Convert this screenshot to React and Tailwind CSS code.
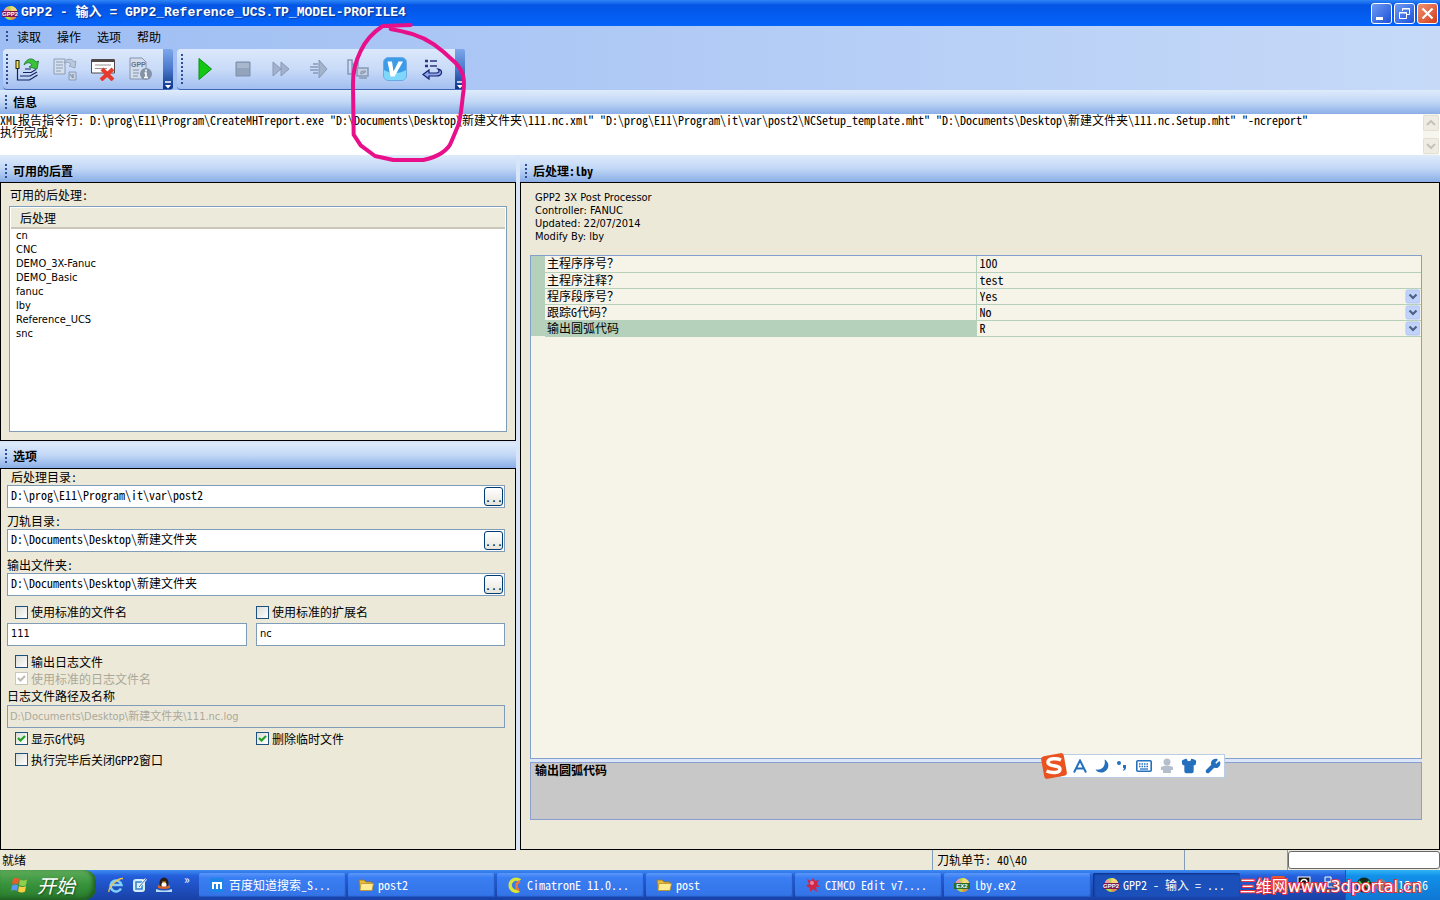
import { useState } from 'react';
import { Shirt, Wrench } from 'lucide-react';

const message = [
    'XML报告指令行: D:\\prog\\E11\\Program\\CreateMHTreport.exe "D:\\Documents\\Desktop\\新建文件夹\\111.nc.xml" "D:\\prog\\E11\\Program\\it\\var\\post2\\NCSetup_template.mht" "D:\\Documents\\Desktop\\新建文件夹\\111.nc.Setup.mht" "-ncreport"',
    '执行完成!',
].join('\n');

const posts = ['cn', 'CNC', 'DEMO_3X-Fanuc', 'DEMO_Basic', 'fanuc', 'lby', 'Reference_UCS', 'snc'];

const properties = [
    { id: 'prog-no', label: '主程序序号？', value: '100' },
    { id: 'prog-note', label: '主程序注释？', value: 'test' },
    { id: 'block-no', label: '程序段序号？', value: 'Yes', options: ['Yes', 'No'] },
    { id: 'trace', label: '跟踪G代码？', value: 'No', options: ['Yes', 'No'] },
    { id: 'arc', label: '输出圆弧代码', value: 'R', options: ['R', 'IJK'], selected: true },
];

const sans = 'font-["DejaVu_Sans_Condensed","Noto_Sans_CJK_SC",sans-serif] text-[11px]';

// Round badge with a dark name plate, shared by the title bar and the taskbar
const Badge = ({ text, plate, className }) => (
    <svg viewBox="0 0 16 16" className={className} aria-hidden="true">
        <circle cx="8.5" cy="8" r="7" fill="#b9dc3c" />
        <path d="M8.500 8 8.500 1A7 7 0 0 1 15.500 8Z" fill="#f6d77c" />
        <path d="M8.500 8 15.500 8A7 7 0 0 1 8.500 15Z" fill="#e58a54" />
        <path d="M1.500 8A7 7 0 0 1 5 2l3.500 6Z" fill="#ef9ab0" />
        <rect x="0" y="6" width="16" height="6" fill={plate} />
        <text x="8" y="11" fontSize="6" fontWeight="700" fill="#fff" textAnchor="middle" fontFamily="Liberation Sans, sans-serif">{text}</text>
    </svg>
);

const Folder = () => (
    <svg viewBox="0 0 16 16" className="size-4" aria-hidden="true">
        <path d="M1 3h5l2 2h6v8H2Z" fill="#e9b93b" stroke="#9c741a" strokeWidth=".8" />
        <path d="M3 6.500h12.500L14 13.500H2Z" fill="#ffeb94" stroke="#b8912b" strokeWidth=".8" />
    </svg>
);

const Grip = ({ className }) => (
    <span className={`w-[2px] shrink-0 bg-[repeating-linear-gradient(to_bottom,#2c4f95_0_2px,transparent_2px_4px)] ${className}`} />
);

const PanelHeader = ({ title, className }) => (
    <h2 className={`flex shrink-0 items-center bg-linear-to-b from-[#dfebfb] via-[#c1d7f6] to-[#8aaee6] pl-[5px] font-bold ${className}`}>
        <Grip className="mr-[6px] h-[14px]" />
        {title}
    </h2>
);

const ToolButton = ({ label, children }) => (
    <button type="button" aria-label={label} className="flex h-full w-[38px] items-center justify-center">
        <svg viewBox="0 0 24 24" className="size-6" fill="none">{children}</svg>
    </button>
);

const Overflow = () => (
    <button type="button" aria-label="更多" className="ml-[3px] flex w-[10px] items-end justify-center rounded-r-xs bg-linear-to-b from-[#7ea6ea] via-[#4a78cb] to-[#0d3388]">
        <svg viewBox="0 0 8 8" className="size-2" aria-hidden="true">
            <path d="M1 1h6" stroke="#fff" strokeWidth="1.500" />
            <path d="M1 4h6L4 7.500Z" fill="#fff" />
        </svg>
    </button>
);

const Check = ({ id, label, checked = false, disabled = false, className = '' }) => {
    const [on, setOn] = useState(checked);
    return (
        <label htmlFor={id} className={`flex items-center gap-[3px] ${disabled ? 'text-[#aca899]' : ''} ${className}`}>
            <span className="relative flex size-[13px]">
                <input
                    id={id}
                    type="checkbox"
                    checked={on}
                    disabled={disabled}
                    onChange={(e) => setOn(e.target.checked)}
                    className="size-[13px] appearance-none border border-[#1c5180] bg-linear-to-br from-[#dcdcd7] to-white disabled:border-[#cac8bb] disabled:from-white"
                />
                {on && (
                    <svg viewBox="0 0 13 13" className="pointer-events-none absolute inset-0" fill="none" aria-hidden="true">
                        <path d="M3 6l2.500 2.500L10 4" stroke={disabled ? '#bfbdb2' : '#21a121'} strokeWidth="2.200" />
                    </svg>
                )}
            </span>
            {label}
        </label>
    );
};

const PathField = ({ id, label, value, indent }) => (
    <div className="mb-[5px]">
        <label htmlFor={id} className={`block h-4 leading-4 ${indent ? 'pl-1' : ''}`}>{label}</label>
        <div className="flex h-[23px] items-center border border-[#7f9db9] bg-white pr-px">
            <input id={id} defaultValue={value} className="h-full min-w-0 flex-1 px-[3px] pb-1 outline-none" />
            <button type="button" aria-label="浏览" className="h-[19px] w-[19px] rounded-[3px] border border-[#003c74] bg-linear-to-b from-white to-[#e6e4da] text-center leading-4">...</button>
        </div>
    </div>
);

const textBox = 'h-[23px] w-full min-w-0 border border-[#7f9db9] bg-white px-[3px] pb-[3px] outline-none';

const MenuBar = () => (
    <nav className="flex h-[19px] items-center pl-[6px]">
        <Grip className="mr-[9px] h-[11px]" />
        <div className="flex gap-4">
            {['读取', '操作', '选项', '帮助'].map((item) => (
                <button key={item} type="button" className="leading-4">{item}</button>
            ))}
        </div>
    </nav>
);

const toolbar = 'flex rounded-sm border-b border-[#3d67b4] bg-linear-to-b from-[#dce8fb] via-[#c9dbf8] to-[#a3bff0]';

const Toolbars = () => (
    <div className="mt-[3px] flex h-[41px] gap-1 pl-[3px]">
        <div className={`${toolbar} pl-[3px]`}>
            <Grip className="my-[5px]" />
            <ToolButton label="读取刀轨">
                <path d="M2.500 3v9" stroke="#222" strokeWidth="4" />
                <path d="M2.500 4v7" stroke="#f4ea3a" strokeWidth="2" />
                <path d="M2.500 12v11h12l8-5M5 19h10l7-4M8 15.500h8l5-3M10 12h6" stroke="#13235f" strokeWidth="1.200" />
                <path d="M9 8C11 1 18 0 21 5l2.500-1-1.500 8-8-2 3-2C15 5 12 5 9 8Z" fill="#39c23a" stroke="#16771f" strokeWidth=".8" />
            </ToolButton>
            <ToolButton label="转换文件">
                <path d="M1 2h11v15H1Z" fill="#d6dfec" stroke="#8c9cb6" />
                <path d="M3 5h7M3 8h7M3 11h7M3 14h5" stroke="#8c9cb6" />
                <path d="M11 6c2-5 8-5 10-1l2-1-1 7-6-2 2-2c-2-2-5-2-7-1Z" fill="#bcc8d9" stroke="#8c9cb6" strokeWidth=".8" />
                <path d="M16 15h7v8h-7Z" fill="#c7d2e2" stroke="#8c9cb6" />
                <path d="M17 17l3 4v-4" stroke="#7384a1" />
            </ToolButton>
            <ToolButton label="清除信息">
                <path d="M.5 3h23v13H.5Z" fill="#fff" stroke="#524848" />
                <path d="M.5 3.500h23" stroke="#524848" strokeWidth="3" />
                <path d="M4 8h16M4 11.500h12" stroke="#9a8f8f" />
                <path d="M11 12l11 11M22 12 10 23" stroke="#e63b2c" strokeWidth="4" />
            </ToolButton>
            <ToolButton label="后处理信息">
                <path d="M1 1h12l4 4v17H1Z" fill="#d3ddeb" stroke="#8494ae" />
                <text x="2" y="10" fontSize="7" fontWeight="700" fill="#63738f" fontFamily="Liberation Sans, sans-serif">GPP</text>
                <path d="M4 13h6M4 16h6M4 19h5" stroke="#8494ae" />
                <circle cx="17" cy="17" r="6" fill="#8392a9" />
                <path d="M17 12.500v2M15.500 16H17v4.500M15 20.500h4" stroke="#fff" strokeWidth="1.600" />
            </ToolButton>
            <Overflow />
        </div>
        <div className={`${toolbar} pl-1`}>
            <Grip className="my-[5px] mr-[3px]" />
            <ToolButton label="运行">
                <path d="M6 1.500 18.500 12 6 22.500Z" fill="#12c813" stroke="#0b8f13" />
            </ToolButton>
            <ToolButton label="停止">
                <path d="M5 5h14v14H5Z" fill="#93a3be" stroke="#7c8dab" />
                <path d="M6 6h12v5H6Z" fill="#a9b7cd" />
            </ToolButton>
            <ToolButton label="快进">
                <path d="M4 5l8 7-8 7ZM12 5l8 7-8 7Z" fill="#a3b2cb" stroke="#8799b8" />
            </ToolButton>
            <ToolButton label="单步">
                <path d="M12 3l8 9-8 9Z" fill="#a3b2cb" stroke="#8799b8" />
                <path d="M6 7h5M3 10h8M3 13h8M6 16h5" stroke="#8799b8" strokeWidth="1.500" />
            </ToolButton>
            <ToolButton label="机床">
                <path d="M3 3h4v14H3ZM7 5l4 8M11 4h2v6" stroke="#8799b8" strokeWidth="1.500" />
                <path d="M12 11h11v8H12ZM14 21h8" fill="#c3cfe1" stroke="#8799b8" strokeWidth="1.500" />
                <path d="M16 17q-1-3 3-3t-3 3" stroke="#8799b8" strokeWidth="1.200" />
            </ToolButton>
            <ToolButton label="校验">
                <rect x=".5" y=".5" width="23" height="23" rx="5" fill="#3c9ce8" stroke="#6aa9e6" />
                <path d="M1 13c6 4 16 4 22 0v6q0 4-4 4H5q-4 0-4-4Z" fill="#7fd8fc" />
                <path d="M4.500 4.500H9l1.500 10 5-10H20l-8.500 15H7.500Z" fill="#fff" />
            </ToolButton>
            <ToolButton label="返回列表">
                <path d="M4 4h3M4 9h3" stroke="#26357f" strokeWidth="2.500" />
                <path d="M9 4h7M9 9h7" stroke="#26357f" strokeWidth="1.500" />
                <path d="M17 12c5 1 5 7-2 7H8v3l-6-4.500L8 13v3h7c3 0 4-2 2-4Z" fill="#8fa5ec" stroke="#16226f" strokeWidth="1.200" />
            </ToolButton>
            <Overflow />
        </div>
    </div>
);

const PropertyGrid = () => (
    <div className="min-h-0 flex-1 border border-[#84a0cf] bg-[#f6f3e8]">
        <table className="w-full table-fixed border-collapse">
            <colgroup>
                <col className="w-[14px]" />
                <col />
                <col className="w-1/2" />
            </colgroup>
            <tbody>
                {properties.map((p) => (
                    <tr key={p.id} className="h-4">
                        <td className="bg-[#b5d1bb] p-0" />
                        <th scope="row" className={`h-4 border-b border-[#b5d1bb] p-0 pl-[2px] text-left font-normal ${p.selected ? 'bg-[#b5d1bb]' : ''}`}>
                            <label htmlFor={p.id} className="block h-[15px] leading-[13px]">{p.label}</label>
                        </th>
                        <td className="h-4 border-b border-l border-[#b5d1bb] p-0">
                            {p.options ? (
                                <div className="relative flex h-[15px]">
                                    <select id={p.id} defaultValue={p.value} className="h-[15px] w-full appearance-none bg-transparent pb-[2px] pl-[3px] leading-[13px] outline-none">
                                        {p.options.map((o) => <option key={o}>{o}</option>)}
                                    </select>
                                    <svg viewBox="0 0 15 15" className="pointer-events-none absolute top-0 right-px size-[15px]" aria-hidden="true">
                                        <rect x="1" y="1" width="14" height="13" rx="1.500" fill="#c1d3fb" stroke="#b0c5f3" />
                                        <path d="M4.500 5.500 8 9l3.500-3.500" fill="none" stroke="#4d6185" strokeWidth="2.200" />
                                    </svg>
                                </div>
                            ) : (
                                <input id={p.id} defaultValue={p.value} className="block h-[15px] w-full bg-transparent pb-[2px] pl-[3px] leading-[13px] outline-none" />
                            )}
                        </td>
                    </tr>
                ))}
            </tbody>
        </table>
    </div>
);

const ImeBar = () => (
    <div className="absolute top-[752px] left-[1040px] flex items-center">
        <svg viewBox="0 0 28 28" className="z-10 size-7" aria-hidden="true">
            <rect x="2.500" y="2.500" width="23" height="23" rx="3" fill="#ea5320" transform="rotate(-10 14 14)" />
            <path d="M21 8C17 6 8 6 8 10.500s12 2 12 6.500S11 21 6.500 19" fill="none" stroke="#fff" strokeWidth="3.500" />
        </svg>
        <div className="-ml-2 flex h-6 w-[165px] items-center justify-between border border-[#b9cde4] bg-white pr-[3px] pl-3 text-[#2470bd]">
            <svg viewBox="0 0 14 14" className="size-[14px]" fill="none" stroke="currentColor" strokeWidth="2" aria-hidden="true">
                <path d="M1 13.500 7 1.500l6 12M3.500 9.500h7" />
            </svg>
            <svg viewBox="0 0 14 14" className="size-[14px]" fill="currentColor" aria-hidden="true">
                <path d="M9.500.5C15 3 14.500 11 9 13 5.500 14.500 2 13 .5 10.500 7 11.500 11 7 9.500.5Z" />
            </svg>
            <svg viewBox="0 0 12 14" className="h-[14px] w-3" fill="currentColor" aria-hidden="true">
                <circle cx="3" cy="4" r="2" />
                <path d="M7 6h3v3q0 2-3 3l1-3H7Z" />
            </svg>
            <svg viewBox="0 0 16 14" className="h-[14px] w-4" fill="none" aria-hidden="true">
                <rect x=".8" y="1.800" width="14.400" height="10.400" rx="1" stroke="currentColor" strokeWidth="1.600" />
                <path d="M3 5h10M3 7.500h10" stroke="currentColor" strokeWidth="1.500" strokeDasharray="1.500 1" />
                <path d="M4 10h8" stroke="currentColor" strokeWidth="1.300" />
            </svg>
            <svg viewBox="0 0 14 16" className="h-4 w-[14px]" fill="#b5bfcc" aria-hidden="true">
                <circle cx="7" cy="4" r="3.500" />
                <path d="M1 9q6-3 12 0v3H11v3H3v-3H1Z" />
            </svg>
            <Shirt className="size-4" fill="currentColor" />
            <Wrench className="size-4" fill="currentColor" />
        </div>
    </div>
);

const tasks = [
    {
        label: '百度知道搜索_S...',
        icon: (
            <svg viewBox="0 0 16 16" className="size-4" aria-hidden="true">
                <rect x="1" y="1" width="14" height="14" rx="2" fill="#1b86e8" />
                <path d="M4 12V6h8v6M8 6v6" fill="none" stroke="#fff" strokeWidth="2" />
            </svg>
        ),
    },
    { label: 'post2', icon: <Folder /> },
    {
        label: 'CimatronE 11.0...',
        icon: (
            <svg viewBox="0 0 16 16" className="size-4" fill="none" aria-hidden="true">
                <path d="M13 3.500A6 6 0 1 0 12 13.500" stroke="#d9e635" strokeWidth="3.500" />
                <path d="M13 4.500A4.500 4.500 0 0 0 12 13" stroke="#f2772b" strokeWidth="2.500" />
            </svg>
        ),
    },
    { label: 'post', icon: <Folder /> },
    {
        label: 'CIMCO Edit v7....',
        icon: (
            <svg viewBox="0 0 16 16" className="size-4" aria-hidden="true">
                <path d="M2 2l4 2 2-3 2 3 4-1-2 4 3 3-4 0 1 5-4-3-3 3v-4L1 9l3-2Z" fill="#cf2647" />
                <circle cx="7" cy="6" r="2" fill="#ef8299" />
            </svg>
        ),
    },
    { label: 'lby.ex2', icon: <Badge text="EX2" plate="#2c6b24" className="size-4" /> },
    { label: 'GPP2 - 输入 = ...', icon: <Badge text="GPP2" plate="#7c1750" className="size-4" />, active: true },
];

const Taskbar = () => (
    <footer className="relative flex h-[30px] shrink-0 overflow-hidden bg-linear-to-b from-[#3f8cf3] via-[#245edb] via-20% to-[#1941a5] text-white">
        <button type="button" className="flex w-24 shrink-0 items-center gap-2 rounded-r-xl bg-linear-to-b from-[#5cab59] via-[#37923a] to-[#2a7a2c] pl-[11px] shadow-[inset_-3px_-2px_4px_#1f5d22]">
            <svg viewBox="0 0 18 18" className="size-[18px]" aria-hidden="true">
                <path d="M2 3q3-2 6 0L7 8.500q-3-2-6 0Z" fill="#ee5a2d" />
                <path d="M9 3.500q3 2 7 0L15 9q-3 2-7 0Z" fill="#8fd04c" />
                <path d="M1 9.500q3-2 6 0L6 15q-3-2-6 0Z" fill="#5d97f4" />
                <path d="M8 10q3 2 7 0l-1 5.500q-3 2-7 0Z" fill="#fbd044" />
            </svg>
            <span className="text-[19px] leading-6 italic [text-shadow:1px_1px_2px_#1c4d1d]">开始</span>
        </button>
        <div className="flex w-[103px] shrink-0 items-center gap-2 pl-3">
            <svg viewBox="0 0 16 16" className="size-4" fill="none" aria-label="Internet Explorer">
                <path d="M13 11.500A5.500 5.500 0 1 1 13.500 8H4" stroke="#7fd0fb" strokeWidth="2.500" />
                <path d="M1 15C0 11 9 1 15 1.500" stroke="#f6c445" strokeWidth="1.300" />
            </svg>
            <svg viewBox="0 0 16 16" className="size-4" aria-label="显示桌面">
                <rect x="1" y="2" width="12" height="13" rx="3" fill="#d7ecfb" />
                <path d="M4 5h6v7H4Z" fill="none" stroke="#2f83c9" strokeWidth="1.500" />
                <path d="M7 10 14 2" stroke="#f3f8fc" strokeWidth="2.500" />
                <path d="M7 10 14 2" stroke="#3a6fa8" />
            </svg>
            <svg viewBox="0 0 16 16" className="size-4" aria-label="QQ">
                <ellipse cx="8" cy="6" rx="4.500" ry="5.500" fill="#2b1b1b" />
                <ellipse cx="8" cy="8" rx="2.500" ry="3" fill="#fff" />
                <path d="M2 8q6 3 12 0v3q-6 2-12 0Z" fill="#d2622a" />
                <path d="M6 4.500h4L8 6.500Z" fill="#f5b22d" />
                <path d="M0 12q8 3 16 0v3H0Z" fill="#b6dcf4" />
            </svg>
            <span className="pb-3 pl-1">»</span>
        </div>
        <div className="flex min-w-0 flex-1 gap-[2px] py-[3px]">
            {tasks.map((t) => (
                <button
                    key={t.label}
                    type="button"
                    className={`flex w-[147px] min-w-0 items-center gap-1 rounded-xs pl-[10px] whitespace-nowrap ${t.active ? 'bg-[#1b4fb9] shadow-[inset_1px_1px_2px_#0d2f80]' : 'bg-linear-to-b from-[#5a97fa] via-[#3a7ef3] via-20% to-[#3373e6] shadow-[inset_-1px_-1px_1px_#2257c0]'}`}
                >
                    {t.icon}
                    {t.label}
                </button>
            ))}
        </div>
        <div className="flex shrink-0 items-center gap-3 pr-2 pb-1">
            <svg viewBox="0 0 14 14" className="size-[14px]" aria-label="搜狗输入法">
                <rect width="14" height="14" rx="2" fill="#e5582b" />
                <path d="M11 4Q4 2 4 5t6 3-6 3" fill="none" stroke="#fff" strokeWidth="2" />
            </svg>
            <svg viewBox="0 0 14 14" className="size-[14px]" aria-label="搜索">
                <rect x="1" y="1" width="12" height="12" fill="#111" stroke="#fff" />
                <circle cx="7" cy="6.500" r="3" fill="none" stroke="#fff" strokeWidth="1.500" />
            </svg>
            <svg viewBox="0 0 14 14" className="size-[14px]" fill="#2a63d6" stroke="#fff" aria-label="窗口">
                <path d="M2 1h6v5H2ZM5 6h7v5H5Z" />
            </svg>
        </div>
        <div className="flex w-[95px] shrink-0 items-center gap-px border-l border-[#0c59b9] bg-linear-to-b from-[#2fb4f6] via-[#1290e9] via-20% to-[#0f77d3] pl-[10px]">
            <svg viewBox="0 0 16 16" className="size-4" aria-hidden="true">
                <circle cx="8" cy="8" r="7.500" fill="#14291a" />
                <path d="M3 4l3 4-3 4M13 4l-3 4 3 4" fill="none" stroke="#2fd456" strokeWidth="2" />
            </svg>
            <svg viewBox="0 0 16 16" className="size-4" aria-hidden="true">
                <circle cx="8" cy="8" r="6" fill="#77808c" />
                <circle cx="7" cy="6" r="2" fill="#aab3bf" />
            </svg>
            <time className="ml-2">15:36</time>
        </div>
        <span className='absolute right-[18px] bottom-[3px] font-["DejaVu_Sans","Noto_Sans_CJK_SC",sans-serif] text-[16px] leading-5 whitespace-nowrap [-webkit-text-stroke:2px_#e6303c] [paint-order:stroke_fill]'>
            三维网www.3dportal.cn
        </span>
    </footer>
);

export default function App() {
    return (
        <div className='relative flex h-screen flex-col overflow-hidden bg-[#d8e5f8] font-["Noto_Sans_Mono_CJK_SC","Noto_Sans_CJK_SC",monospace] text-[12px] leading-[12px] text-black'>
            <header className="flex h-[26px] shrink-0 items-center bg-linear-to-b from-[#2f86f7] via-[#0455e4] via-20% to-[#0464fb] pr-[2px] pl-[2px]">
                <Badge text="GPP2" plate="#7c1750" className="mr-[3px] size-4" />
                <h1 className='font-["Liberation_Mono","Noto_Sans_CJK_SC",monospace] text-[13px] leading-5 font-bold text-white [text-shadow:1px_1px_1px_#0a2f8c]'>
                    GPP2 - 输入 = GPP2_Reference_UCS.TP_MODEL-PROFILE4
                </h1>
                <div className="ml-auto flex gap-[2px]">
                    <button type="button" aria-label="最小化" className="rounded-[3px] border border-white bg-linear-to-br from-[#6f9af5] to-[#1f4fd6]">
                        <svg viewBox="0 0 19 19" className="size-[19px]" aria-hidden="true"><path d="M4 13h7v3H4Z" fill="#fff" /></svg>
                    </button>
                    <button type="button" aria-label="还原" className="rounded-[3px] border border-white bg-linear-to-br from-[#6f9af5] to-[#1f4fd6]">
                        <svg viewBox="0 0 19 19" className="size-[19px]" fill="none" stroke="#fff" aria-hidden="true">
                            <path d="M7.500 7V4.500h7v6H12M7 5h8" /><path d="M4.500 8.500h7v6h-7ZM4 9h8" />
                        </svg>
                    </button>
                    <button type="button" aria-label="关闭" className="rounded-[3px] border border-white bg-linear-to-br from-[#f0906f] to-[#d03a14]">
                        <svg viewBox="0 0 19 19" className="size-[19px]" aria-hidden="true"><path d="M4.500 4.500l10 10M14.500 4.500l-10 10" stroke="#fff" strokeWidth="2.200" /></svg>
                    </button>
                </div>
            </header>

            <div className="shrink-0 bg-linear-to-r from-[#9ebdf3] to-[#c6daf8] pt-px">
                <MenuBar />
                <Toolbars />
            </div>

            <PanelHeader title="信息" className="h-6" />
            <div className="flex h-[41px] shrink-0 bg-white pr-px">
                <textarea readOnly aria-label="信息" wrap="off" value={message} className="min-w-0 flex-1 resize-none overflow-hidden outline-none" />
                <div className="flex w-4 flex-col justify-between bg-[#f6f5ee] py-px text-[#c5c3b8]">
                    <button type="button" aria-label="向上" className="rounded-xs border border-[#e2e0d5] bg-[#efede3]">
                        <svg viewBox="0 0 14 14" className="size-[14px]" fill="none" stroke="currentColor" strokeWidth="2" aria-hidden="true"><path d="M3 9l4-4 4 4" /></svg>
                    </button>
                    <button type="button" aria-label="向下" className="rounded-xs border border-[#e2e0d5] bg-[#efede3]">
                        <svg viewBox="0 0 14 14" className="size-[14px]" fill="none" stroke="currentColor" strokeWidth="2" aria-hidden="true"><path d="M3 5l4 4 4-4" /></svg>
                    </button>
                </div>
            </div>

            <main className="flex min-h-0 flex-1 gap-1">
                <div className="flex w-[516px] shrink-0 flex-col">
                    <PanelHeader title="可用的后置" className="h-[27px] pt-1" />
                    <section className="flex h-[259px] flex-col border border-black bg-[#ece9d8] px-2 pb-2">
                        <p className="h-[23px] pl-px leading-6">可用的后处理:</p>
                        <div className="flex-1 border border-[#7f9db9] bg-white p-px">
                            <table className="w-full border-collapse text-left">
                                <thead>
                                    <tr><th className="h-5 border-b-2 border-[#cbc7b8] bg-[#ebeadb] pl-[9px] font-normal">后处理</th></tr>
                                </thead>
                                <tbody className={sans}>
                                    {posts.map((p) => (
                                        <tr key={p}><td className="h-[14px] p-0 pl-[5px] leading-[14px]">{p}</td></tr>
                                    ))}
                                </tbody>
                            </table>
                        </div>
                    </section>

                    <PanelHeader title="选项" className="mt-[2px] h-[25px]" />
                    <section className="min-h-0 flex-1 border border-black bg-[#ece9d8] pr-[10px] pl-[6px]">
                        <PathField id="post-dir" label="后处理目录:" value={'D:\\prog\\E11\\Program\\it\\var\\post2'} indent />
                        <PathField id="tp-dir" label="刀轨目录:" value={'D:\\Documents\\Desktop\\新建文件夹'} />
                        <PathField id="out-dir" label="输出文件夹:" value={'D:\\Documents\\Desktop\\新建文件夹'} />
                        <div className="grid grid-cols-[240fr_249fr] gap-x-[9px]">
                            <Check id="std-name" label="使用标准的文件名" className="h-[22px] pl-2" />
                            <Check id="std-ext" label="使用标准的扩展名" className="h-[22px]" />
                            <input aria-label="文件名" defaultValue="111" className={`${textBox} ${sans}`} />
                            <input aria-label="扩展名" defaultValue="nc" className={`${textBox} ${sans}`} />
                        </div>
                        <Check id="write-log" label="输出日志文件" className="mt-[7px] h-[17px] pl-2" />
                        <Check id="std-log" label="使用标准的日志文件名" checked disabled className="h-[17px] pl-2" />
                        <label htmlFor="log-path" className="block h-[18px] leading-[18px]">日志文件路径及名称</label>
                        <input id="log-path" disabled defaultValue={'D:\\Documents\\Desktop\\新建文件夹\\111.nc.log'} className={`h-[23px] w-full border border-[#7f9db9] bg-[#ebe8d9] px-[2px] pb-[3px] text-[#aca899] ${sans}`} />
                        <div className="grid grid-cols-[240fr_249fr] gap-x-[9px]">
                            <Check id="show-g" label="显示G代码" checked className="h-[21px] pl-2" />
                            <Check id="del-temp" label="删除临时文件" checked className="h-[21px]" />
                        </div>
                        <Check id="close-after" label="执行完毕后关闭GPP2窗口" className="h-[21px] pl-2" />
                    </section>
                </div>

                <div className="flex min-w-0 flex-1 flex-col">
                    <PanelHeader title="后处理:lby" className="h-[27px] pt-1" />
                    <section className="flex min-h-0 flex-1 flex-col border border-black bg-[#ece9d8] pt-2 pr-[17px] pb-[29px] pl-[9px]">
                        <div className={`h-16 pl-[5px] ${sans}`}>
                            <p className="leading-[13px]">GPP2 3X Post Processor</p>
                            <p className="leading-[13px]">Controller: FANUC</p>
                            <p className="leading-[13px]">Updated: 22/07/2014</p>
                            <p className="leading-[13px]">Modify By: lby</p>
                        </div>
                        <PropertyGrid />
                        <div className="h-[3px] bg-[#dbe7f8]" />
                        <div className="h-[58px] border border-[#8a9fd0] bg-[#c8c8c8] px-1 pt-px font-bold">输出圆弧代码</div>
                    </section>
                </div>
            </main>

            <div className="flex h-5 shrink-0 items-center bg-[#ece9d8]">
                <span className="flex-1 pl-[2px]">就绪</span>
                <span className="flex h-full w-[252px] items-center border-l border-[#7f9db9] pl-1">刀轨单节: 40\40</span>
                <span className="h-full w-[103px] border-l border-[#7f9db9]" />
                <span className="flex h-full w-[153px] border-l border-[#7f9db9] py-px">
                    <input aria-label="进度" readOnly className="w-full rounded-[3px] border border-[#686868] bg-white" />
                </span>
            </div>

            <Taskbar />

            {/* Hand-drawn ring round the verify button */}
            <svg viewBox="0 0 390 450" className="pointer-events-none absolute top-5 left-[350px] h-[150px] w-[130px]" fill="none" stroke="#e8108a" strokeWidth="12" strokeLinecap="round" strokeLinejoin="round" aria-hidden="true">
                <path d="M182 15 98 18C62 42 42 70 31 95C14 130 8 160 9 195L11 344 32 376 75 408 130 420 220 420C262 412 296 390 304 365L325 315C335 280 336 240 341 210C345 165 335 150 318 130L280 95C240 60 200 42 160 35L122 27" />
            </svg>
            <ImeBar />
        </div>
    );
}
